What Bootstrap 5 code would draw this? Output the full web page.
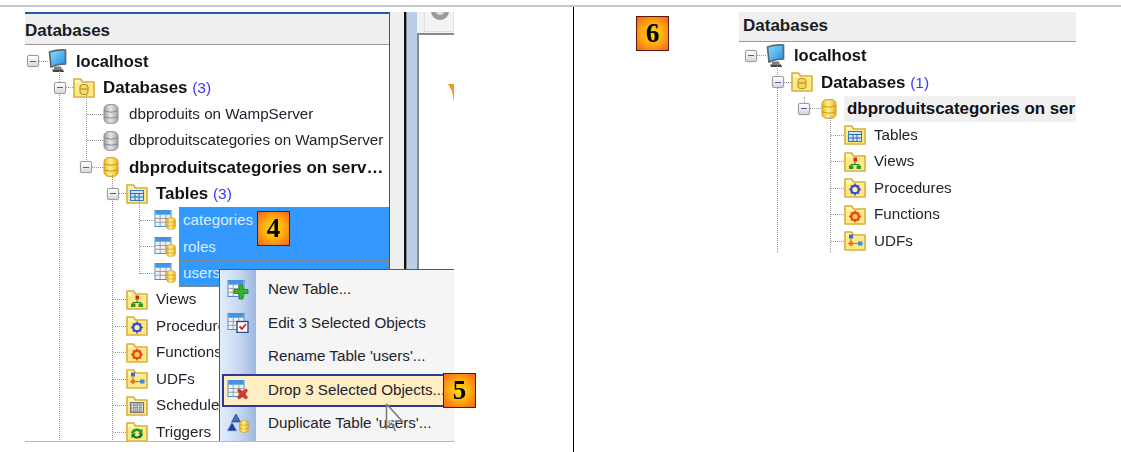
<!DOCTYPE html>
<html lang="en">
<head>
    <meta charset="UTF-8">
    <title>Databases tree</title>
    <meta name="viewport" content="width=device-width, initial-scale=1">
    <link href="https://cdn.jsdelivr.net/npm/bootstrap@5.3.2/dist/css/bootstrap.min.css" rel="stylesheet">
    <style>
        html, body { height: 100%; overflow: hidden; background: #fff; }
        body { font-family: "Liberation Sans", Arial, sans-serif; font-size: 15.2px; color: #23232f; }
        .sheet { margin-top: 5px; height: 447px; border-top: 2px solid #c8c8c8; }
        .cell-left { width: 574px; border-right: 1px solid #000; padding: 5px 0 0 25px; }
        .cell-right { padding: 5px 0 0 62px; }

        .shot { width: 429px; height: 430px; border-bottom: 1px solid #b9b9b9; filter: blur(.4px); }
        .pane { width: 365px; border-top: 2px solid #2a56b0; border-right: 1px solid #2a56b0; }
        .pane-head { height: 31px; background: #efefef; border-bottom: 1px solid #9a9a9a; font-weight: 700; font-size: 17px; color: #1c1c26; line-height: 33px; }
        .pane-left .tree { padding-top: 3px; }
        .gutter-a { width: 14px; background: #efefef; }
        .gutter-b { width: 3px; background: #111; border-right: 1px solid #8a8a8a; }
        .gutter-c { width: 10px; background: linear-gradient(#b9cfe9 0, #b9cfe9 70%, #cfdff1 80%, #b9cfe9 100%); }
        .work { width: 37px; }
        .work-bar { height: 21px; background: #f1f1f1; padding-left: 7px; }
        .work-tool { height: 20px; border: 1px solid #e0e0e0; border-top: 0; background: #f4f4f4; }
        .work-body { border-top: 2px solid #8a8a8a; border-left: 2px solid #8a8a8a; background: #fff; padding: 49px 0 0 29px; }

        .tree { white-space: nowrap; }
        .twig { height: 26.5px; }
        .branch { position: relative; }
        .branch::before { content: ""; position: absolute; left: 0; top: -6px; bottom: 0; border-left: 1px dotted #9a9a9a; }
        .stop-elbow::before { bottom: 13px; }
        .stop-next::before { bottom: -6px; }
        .b1 { margin-left: 34px; padding-left: 1px; }
        .b2 { margin-left: 26px; padding-left: 1px; }
        .b3 { margin-left: 52px; padding-left: 1px; }
        .b4 { margin-left: 26px; padding-left: 1px; }

        .toggle { flex: none; width: 12px; height: 12px; border: 1px solid #9c9c9c; border-radius: 2px; background: linear-gradient(#fff, #d8d8d8); position: relative; z-index: 1; box-shadow: 0 0 1px #9c9c9c; }
        .toggle::after { content: ""; position: absolute; left: 2px; right: 2px; top: 4.500px; height: 1px; background: #4c5fa8; }
        .toggle-up::before { content: ""; position: absolute; left: 5px; top: -7px; height: 6px; border-left: 1px dotted #9a9a9a; }
        .pull { margin-left: -6px; }
        .pull-serv { margin-left: 20px; }
        .first-toggle { margin-left: 2px; }
        .dots { flex: none; border-top: 1px dotted #9a9a9a; }
        .w7 { width: 7px; } .w9 { width: 9px; } .w11 { width: 11px; } .w13 { width: 13px; } .w14 { width: 14px; } .w16 { width: 16px; }
        .ico { flex: none; display: block; }
        .lbl { padding-left: 8px; }
        .lbl-db { padding-left: 10px; }
        .lbl-host { padding-left: 9px; font-weight: 700; font-size: 16.5px; color: #111118; }
        .strong { font-weight: 700; font-size: 16.9px; color: #111118; }
        .count { font-weight: 400; font-size: 15.5px; color: #3b3bf0; }
        .pick { flex: 1 1 auto; margin-left: 3px; height: 100%; background: #3399ff; color: #d9ecff; padding-left: 4px; line-height: 26.5px; }
        .pick-focus { outline: 1px dashed #a97a4a; outline-offset: -1px; }
        .tint { flex: 1 1 auto; margin-left: 7px; height: 100%; background: #f0f0f0; padding-left: 3px; line-height: 26.5px; }

        .ctx.dropdown-menu { left: 194px; top: 257px; width: 240px; height: 180px; margin: 0; padding: 3px 0 0; border: 1px solid #3a5aa8; border-radius: 0; background: linear-gradient(90deg, #e2edfb 0, #c9dbf2 18px, #9db7dd 36px, #f5f5f5 36px); font-size: 15.2px; z-index: 2; }
        .ctx .dropdown-item { height: 33.5px; margin-left: 2px; width: 230px; padding: 0 0 0 4px; border: 1px solid transparent; color: #23232f; background: transparent; }
        .ctx .dropdown-item.hot { background: #ffeec4; border: 2px solid #2b3a94; padding-left: 3px; }
        .ctx .ico { margin-right: 19px; }
        .blank-ico { width: 22px; }

        .tag { width: 33px; height: 35px; border: 1px solid #5a1c08; background: radial-gradient(circle at 50% 50%, #ffe000 0, #ffb010 45%, #f4601c 100%); color: #000; font-family: "Liberation Serif", "Times New Roman", serif; font-weight: 700; font-size: 27px; line-height: 33px; text-align: center; }
        .tag-four { position: absolute; left: 257px; top: 204px; z-index: 3; }
        .tag-five { position: absolute; left: 443px; top: 366px; z-index: 3; }
        .tag-six { margin-top: 4px; margin-right: 70px; flex: none; }
        .pointer { position: absolute; left: 385px; top: 396px; z-index: 3; }

        .pane-right { width: 337px; height: 242px; filter: blur(.4px); }
        .pane-right .pane-head { height: 30px; line-height: 27px; padding-left: 4px; }
        .pane-right .tree { padding: .5px 0 0 4px; }
    </style>
</head>
<body>
    <svg width="0" height="0" class="position-absolute">
        <defs>
            <linearGradient id="grayCyl" x1="0" x2="1" y1="0" y2="0"><stop offset="0" stop-color="#9c9c9c"/><stop offset=".45" stop-color="#e8e8e8"/><stop offset="1" stop-color="#a2a2a2"/></linearGradient>
            <linearGradient id="goldCyl" x1="0" x2="1" y1="0" y2="0"><stop offset="0" stop-color="#e9b92a"/><stop offset=".45" stop-color="#fff28a"/><stop offset="1" stop-color="#e6b21e"/></linearGradient>
            <linearGradient id="screen" x1="0" x2="1" y1="0" y2="1"><stop offset="0" stop-color="#8fdcfd"/><stop offset="1" stop-color="#1d8fe0"/></linearGradient>

            <symbol id="folderBase" viewBox="0 0 22 20">
                <path d="M1 19V1h6.500l2 3H21v15z" fill="#fff6b8" stroke="#d9ae35" stroke-width="1.600" stroke-linejoin="round"/>
                <path d="M2 18V5.500h18V18z" fill="#ffe987"/>
            </symbol>
            <symbol id="monitor" viewBox="0 0 19 24">
                <path d="M1.500 3Q9 .5 17.500 1v14Q9 15 3 18z" fill="url(#screen)" stroke="#5c6670" stroke-width="1.700" stroke-linejoin="round"/>
                <path d="M6 17.500h7l1 3H6z" fill="#7a7a7a"/>
                <path d="M4 20.500h11l1 2.500H5z" fill="#444"/>
            </symbol>
            <symbol id="cylGray" viewBox="0 0 16 20">
                <rect x="1" y=".7" width="14" height="18.600" rx="4.500" fill="url(#grayCyl)" stroke="#8a8a8a"/>
                <path d="M1.500 7q6.500 2.500 13 0M1.500 13q6.500 2.500 13 0" fill="none" stroke="#8a8a8a"/>
            </symbol>
            <symbol id="cylGold" viewBox="0 0 16 20">
                <rect x="1" y=".7" width="14" height="18.600" rx="4.500" fill="url(#goldCyl)" stroke="#c9971a"/>
                <path d="M1.500 7q6.500 2.500 13 0M1.500 13q6.500 2.500 13 0" fill="none" stroke="#c9971a"/>
            </symbol>
            <symbol id="grid" viewBox="0 0 18 18">
                <rect x=".5" y=".5" width="17" height="17" fill="#f2f2f2" stroke="#3f8bd6"/>
                <rect x="1" y="1" width="16" height="4" fill="#3f95e6"/>
                <path d="M1 9h16M1 13h16M6 5v12M12 5v12" stroke="#9a9a9a" fill="none"/>
            </symbol>

            <symbol id="tblCyl" viewBox="0 0 22 20">
                <use href="#grid" x="0" y="0" width="18" height="17"/>
                <use href="#cylGold" x="12" y="7" width="10" height="13"/>
            </symbol>
            <symbol id="fDb" viewBox="0 0 22 20">
                <use href="#folderBase" width="22" height="20"/>
                <rect x="7" y="6.500" width="8" height="10" rx="2.500" fill="#f6d860" stroke="#a98a2a"/>
                <path d="M7.500 11h7" stroke="#a98a2a"/>
            </symbol>
            <symbol id="fTbl" viewBox="0 0 22 20">
                <use href="#folderBase" width="22" height="20"/>
                <rect x="4.500" y="6.500" width="13" height="10" fill="#d5e6fa" stroke="#2f7ad0"/>
                <path d="M4.500 9.500h13M4.500 13h13M9 9.500v7M13 9.500v7" stroke="#2f6ab0" fill="none"/>
            </symbol>
            <symbol id="fViews" viewBox="0 0 22 20">
                <use href="#folderBase" width="22" height="20"/>
                <rect x="9.500" y="5.500" width="3.500" height="4" fill="#d8261c"/>
                <path d="M11 9.500v3M7 14v-1.500h8V14" stroke="#2c7d20" fill="none"/>
                <rect x="5" y="13.500" width="4.500" height="3.500" fill="#2f9a22"/>
                <rect x="12.500" y="13.500" width="4.500" height="3.500" fill="#2f9a22"/>
            </symbol>
            <symbol id="fProc" viewBox="0 0 22 20">
                <use href="#folderBase" width="22" height="20"/>
                <circle cx="11" cy="11.500" r="3.800" fill="#fff3a6" stroke="#3d4fd0" stroke-width="2.400"/>
                <path d="M11 5.500v2.500M11 15v2.500M5 11.500h2.500M14.500 11.500H17M7 7.500l1.800 1.800M13.200 13.700l1.800 1.800M15 7.500l-1.800 1.800M8.800 13.700 7 15.500" stroke="#3d4fd0" stroke-width="1.600"/>
            </symbol>
            <symbol id="fFunc" viewBox="0 0 22 20">
                <use href="#folderBase" width="22" height="20"/>
                <circle cx="11" cy="11.500" r="3.800" fill="#ffd24a" stroke="#e8481c" stroke-width="2.400"/>
                <path d="M11 5.500v2.500M11 15v2.500M5 11.500h2.500M14.500 11.500H17M7 7.500l1.800 1.800M13.200 13.700l1.800 1.800M15 7.500l-1.800 1.800M8.800 13.700 7 15.500" stroke="#e8481c" stroke-width="1.600"/>
            </symbol>
            <symbol id="fUdf" viewBox="0 0 22 20">
                <use href="#folderBase" width="22" height="20"/>
                <rect x="5" y="3.500" width="4" height="4" fill="#2f6fd0"/>
                <path d="M7 7.500v5M7 12.500h8" stroke="#c8781c" fill="none"/>
                <path d="M7 9.500l3 3-3 3-3-3z" fill="#e8742a"/>
                <rect x="14" y="10.500" width="4.500" height="4" fill="#3a8fd8"/>
            </symbol>
            <symbol id="fSched" viewBox="0 0 22 20">
                <use href="#folderBase" width="22" height="20"/>
                <rect x="4.500" y="6.500" width="13" height="10" fill="#cfcfcf" stroke="#777"/>
                <path d="M5 9h12M5 12h12M5 15h12M8 7v9M11 7v9M14 7v9" stroke="#666" stroke-dasharray="1 1" fill="none"/>
            </symbol>
            <symbol id="fTrig" viewBox="0 0 22 20">
                <use href="#folderBase" width="22" height="20"/>
                <path d="M5 11q1-4.500 6-4.500 2.500 0 4 1.500l1.500-1.500V12h-4.500l1.500-1.500q-1-1.500-2.500-1.500-2 0-3 2z" fill="#1f9a2a"/>
                <path d="M17 12q-1 4.500-6 4.500-2.500 0-4-1.500l-1.500 1.500V11.500H10L8.500 13q1 1.500 2.500 1.500 2 0 3-2.500z" fill="#12742a"/>
            </symbol>

            <symbol id="mNew" viewBox="0 0 22 20">
                <use href="#grid" x="0" y="0" width="18" height="17"/>
                <path d="M12 5h4v4.500h5v4h-5V19h-4v-5.500H7v-4h5z" fill="#37b02e" stroke="#1f7a1c" stroke-width=".8"/>
            </symbol>
            <symbol id="mEdit" viewBox="0 0 22 20">
                <use href="#grid" x="0" y="0" width="18" height="17"/>
                <rect x="10" y="8.500" width="11" height="11" fill="#fff" stroke="#2a4c8a" stroke-width="1.400"/>
                <path d="M12.500 13.500l2.500 2.500 4-5" fill="none" stroke="#d81c1c" stroke-width="1.800"/>
            </symbol>
            <symbol id="mDrop" viewBox="0 0 22 20">
                <use href="#grid" x="0" y="0" width="18" height="17"/>
                <path d="M12 8.500l3.500 2.500 3.500-2.500 2 2-2.500 3.500 2.500 3.500-2 2-3.500-2.500-3.500 2.500-2-2 2.500-3.500-2.500-3.500z" fill="#cf3a2a"/>
            </symbol>
            <symbol id="mDup" viewBox="0 0 22 20">
                <path d="M9 0l4.500 8h-9z" fill="#3f6fc4" stroke="#1f3f8a" stroke-width=".7"/>
                <path d="M5 8l5 9H0z" fill="#1f3f9a" stroke="#a9bbdd" stroke-width=".7"/>
                <use href="#cylGold" x="12" y="5" width="10" height="15"/>
            </symbol>
        </defs>
    </svg>

    <div class="sheet d-flex">
        <div class="cell-left position-relative flex-none">
            <div class="shot d-flex position-relative overflow-hidden">
                <div class="pane pane-left flex-shrink-0 overflow-hidden">
                    <div class="pane-head">Databases</div>
                    <div class="tree">
                        <div class="twig d-flex align-items-center">
                            <span class="toggle first-toggle"></span><span class="dots w9"></span>
                            <svg class="ico" width="19" height="24"><use href="#monitor"/></svg>
                            <span class="lbl-host">localhost</span>
                        </div>
                        <div class="branch b1">
                            <div class="twig d-flex align-items-center">
                                <span class="toggle pull"></span><span class="dots w7"></span>
                                <svg class="ico" width="22" height="20"><use href="#fDb"/></svg>
                                <span class="lbl strong">Databases <span class="count">(3)</span></span>
                            </div>
                            <div class="branch b2 stop-next">
                                <div class="twig d-flex align-items-center">
                                    <span class="dots w16"></span>
                                    <svg class="ico" width="16" height="20"><use href="#cylGray"/></svg>
                                    <span class="lbl-db">dbproduits on WampServer</span>
                                </div>
                                <div class="twig d-flex align-items-center">
                                    <span class="dots w16"></span>
                                    <svg class="ico" width="16" height="20"><use href="#cylGray"/></svg>
                                    <span class="lbl-db">dbproduitscategories on WampServer</span>
                                </div>
                            </div>
                            <div class="twig d-flex align-items-center">
                                <span class="toggle pull-serv"></span><span class="dots w11"></span>
                                <svg class="ico" width="16" height="20"><use href="#cylGold"/></svg>
                                <span class="lbl-db strong">dbproduitscategories on serv…</span>
                            </div>
                            <div class="branch b3">
                                <div class="twig d-flex align-items-center">
                                    <span class="toggle pull"></span><span class="dots w7"></span>
                                    <svg class="ico" width="22" height="20"><use href="#fTbl"/></svg>
                                    <span class="lbl strong">Tables <span class="count">(3)</span></span>
                                </div>
                                <div class="branch b4 stop-elbow">
                                    <div class="twig d-flex align-items-center">
                                        <span class="dots w14"></span>
                                        <svg class="ico" width="22" height="20"><use href="#tblCyl"/></svg>
                                        <span class="pick">categories</span>
                                    </div>
                                    <div class="twig d-flex align-items-center">
                                        <span class="dots w14"></span>
                                        <svg class="ico" width="22" height="20"><use href="#tblCyl"/></svg>
                                        <span class="pick">roles</span>
                                    </div>
                                    <div class="twig d-flex align-items-center">
                                        <span class="dots w14"></span>
                                        <svg class="ico" width="22" height="20"><use href="#tblCyl"/></svg>
                                        <span class="pick pick-focus">users</span>
                                    </div>
                                </div>
                                <div class="twig d-flex align-items-center"><span class="dots w13"></span><svg class="ico" width="22" height="20"><use href="#fViews"/></svg><span class="lbl">Views</span></div>
                                <div class="twig d-flex align-items-center"><span class="dots w13"></span><svg class="ico" width="22" height="20"><use href="#fProc"/></svg><span class="lbl">Procedures</span></div>
                                <div class="twig d-flex align-items-center"><span class="dots w13"></span><svg class="ico" width="22" height="20"><use href="#fFunc"/></svg><span class="lbl">Functions</span></div>
                                <div class="twig d-flex align-items-center"><span class="dots w13"></span><svg class="ico" width="22" height="20"><use href="#fUdf"/></svg><span class="lbl">UDFs</span></div>
                                <div class="twig d-flex align-items-center"><span class="dots w13"></span><svg class="ico" width="22" height="20"><use href="#fSched"/></svg><span class="lbl">Scheduled Tasks</span></div>
                                <div class="twig d-flex align-items-center"><span class="dots w13"></span><svg class="ico" width="22" height="20"><use href="#fTrig"/></svg><span class="lbl">Triggers</span></div>
                            </div>
                        </div>
                    </div>
                </div>
                <div class="gutter-a flex-shrink-0"></div>
                <div class="gutter-b flex-shrink-0"></div>
                <div class="gutter-c flex-shrink-0"></div>
                <div class="work flex-shrink-0 d-flex flex-column">
                    <div class="work-bar">
                        <div class="work-tool overflow-hidden">
                            <svg class="ico ms-1" width="22" height="10"><circle cx="11" cy="-1" r="9" fill="#9a9a9a"/><circle cx="11" cy="-1" r="4" fill="#dcdcdc"/></svg>
                        </div>
                    </div>
                    <div class="work-body flex-grow-1">
                        <svg class="ico" width="8" height="18"><path d="M0 0h8v5L7 18H6L4 7z" fill="#f7941e"/></svg>
                    </div>
                </div>

                <ul class="ctx dropdown-menu show list-unstyled">
                    <li><a class="dropdown-item d-flex align-items-center" href="#"><svg class="ico" width="22" height="20"><use href="#mNew"/></svg>New Table...</a></li>
                    <li><a class="dropdown-item d-flex align-items-center" href="#"><svg class="ico" width="22" height="20"><use href="#mEdit"/></svg>Edit 3 Selected Objects</a></li>
                    <li><a class="dropdown-item d-flex align-items-center" href="#"><span class="ico blank-ico"></span>Rename Table 'users'...</a></li>
                    <li><a class="dropdown-item hot d-flex align-items-center" href="#"><svg class="ico" width="22" height="20"><use href="#mDrop"/></svg>Drop 3 Selected Objects...</a></li>
                    <li><a class="dropdown-item d-flex align-items-center" href="#"><svg class="ico" width="22" height="20"><use href="#mDup"/></svg>Duplicate Table 'users'...</a></li>
                </ul>
            </div>

            <div class="tag tag-four">4</div>
            <div class="tag tag-five">5</div>
            <svg class="pointer" width="20" height="30"><path d="M1.500 1v24l5-5 4 8M1.500 1 17 18h-7" fill="#fff" fill-opacity=".55" stroke="#7a7a7a" stroke-width="1.600"/></svg>
        </div>

        <div class="cell-right d-flex align-items-start">
            <div class="tag tag-six">6</div>
            <div class="pane-right overflow-hidden">
                <div class="pane-head">Databases</div>
                <div class="tree">
                    <div class="twig d-flex align-items-center">
                        <span class="toggle first-toggle"></span><span class="dots w9"></span>
                        <svg class="ico" width="19" height="24"><use href="#monitor"/></svg>
                        <span class="lbl-host">localhost</span>
                    </div>
                    <div class="branch b1">
                        <div class="twig d-flex align-items-center">
                            <span class="toggle pull"></span><span class="dots w7"></span>
                            <svg class="ico" width="22" height="20"><use href="#fDb"/></svg>
                            <span class="lbl strong">Databases <span class="count">(1)</span></span>
                        </div>
                        <div class="twig d-flex align-items-center">
                            <span class="toggle toggle-up pull-serv"></span><span class="dots w11"></span>
                            <svg class="ico" width="16" height="20"><use href="#cylGold"/></svg>
                            <span class="tint strong">dbproduitscategories on ser</span>
                        </div>
                        <div class="branch b3">
                            <div class="twig d-flex align-items-center"><span class="dots w13"></span><svg class="ico" width="22" height="20"><use href="#fTbl"/></svg><span class="lbl">Tables</span></div>
                            <div class="twig d-flex align-items-center"><span class="dots w13"></span><svg class="ico" width="22" height="20"><use href="#fViews"/></svg><span class="lbl">Views</span></div>
                            <div class="twig d-flex align-items-center"><span class="dots w13"></span><svg class="ico" width="22" height="20"><use href="#fProc"/></svg><span class="lbl">Procedures</span></div>
                            <div class="twig d-flex align-items-center"><span class="dots w13"></span><svg class="ico" width="22" height="20"><use href="#fFunc"/></svg><span class="lbl">Functions</span></div>
                            <div class="twig d-flex align-items-center"><span class="dots w13"></span><svg class="ico" width="22" height="20"><use href="#fUdf"/></svg><span class="lbl">UDFs</span></div>
                        </div>
                    </div>
                </div>
            </div>
        </div>
    </div>
    <script src="https://cdn.jsdelivr.net/npm/bootstrap@5.3.2/dist/js/bootstrap.bundle.min.js"></script>
</body>
</html>
